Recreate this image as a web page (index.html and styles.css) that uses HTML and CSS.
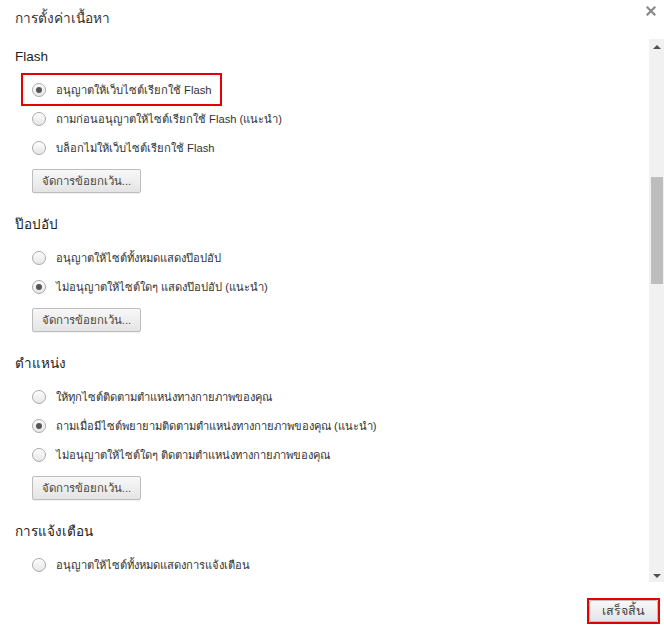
FILE: index.html
```html
<!DOCTYPE html>
<html lang="th">
<head>
<meta charset="utf-8">
<title>การตั้งค่าเนื้อหา</title>
<link rel="stylesheet" href="styles.css">
</head>
<body>
<div class="dialog">
  <div class="dialog-header">
    <h1 class="dialog-title">การตั้งค่าเนื้อหา</h1>
    <button class="close-btn" aria-label="ปิด">
      <svg width="10" height="10" viewBox="0 0 10 10"><path d="M1.5 1.5 L8.5 8.5 M8.5 1.5 L1.5 8.5" stroke="#8a8a8a" stroke-width="2.2" stroke-linecap="square"/></svg>
    </button>
  </div>

  <div class="dialog-body">
    <div class="scroll-content">
      <section class="group">
        <h2 class="group-title">Flash</h2>
        <label class="option highlight"><span class="radio checked"></span><span class="option-text">อนุญาตให้เว็บไซต์เรียกใช้ Flash</span></label>
        <label class="option"><span class="radio"></span><span class="option-text">ถามก่อนอนุญาตให้ไซต์เรียกใช้ Flash (แนะนำ)</span></label>
        <label class="option"><span class="radio"></span><span class="option-text">บล็อกไม่ให้เว็บไซต์เรียกใช้ Flash</span></label>
        <button class="btn btn-exceptions">จัดการข้อยกเว้น...</button>
      </section>

      <section class="group">
        <h2 class="group-title">ป๊อปอัป</h2>
        <label class="option"><span class="radio"></span><span class="option-text">อนุญาตให้ไซต์ทั้งหมดแสดงป๊อปอัป</span></label>
        <label class="option"><span class="radio checked"></span><span class="option-text">ไม่อนุญาตให้ไซต์ใดๆ แสดงป๊อปอัป (แนะนำ)</span></label>
        <button class="btn btn-exceptions">จัดการข้อยกเว้น...</button>
      </section>

      <section class="group">
        <h2 class="group-title">ตำแหน่ง</h2>
        <label class="option"><span class="radio"></span><span class="option-text">ให้ทุกไซต์ติดตามตำแหน่งทางกายภาพของคุณ</span></label>
        <label class="option"><span class="radio checked"></span><span class="option-text">ถามเมื่อมีไซต์พยายามติดตามตำแหน่งทางกายภาพของคุณ (แนะนำ)</span></label>
        <label class="option"><span class="radio"></span><span class="option-text">ไม่อนุญาตให้ไซต์ใดๆ ติดตามตำแหน่งทางกายภาพของคุณ</span></label>
        <button class="btn btn-exceptions">จัดการข้อยกเว้น...</button>
      </section>

      <section class="group">
        <h2 class="group-title">การแจ้งเตือน</h2>
        <label class="option"><span class="radio"></span><span class="option-text">อนุญาตให้ไซต์ทั้งหมดแสดงการแจ้งเตือน</span></label>
      </section>
    </div>

    <div class="scrollbar">
      <span class="arrow arrow-up"></span>
      <div class="track"><div class="thumb"></div></div>
      <span class="arrow arrow-down"></span>
    </div>
  </div>

  <div class="dialog-footer">
    <div class="done-frame"><button class="btn btn-done">เสร็จสิ้น</button></div>
  </div>
</div>
</body>
</html>
```
FILE: styles.css
```css
* { box-sizing: border-box; }

html, body {
  margin: 0;
  padding: 0;
  background: #fff;
}

body {
  font-family: "Liberation Sans", "Noto Sans", sans-serif;
  font-size: 11.2px;
  color: #333;
}

.dialog {
  width: 664px;
  height: 632px;
  display: flex;
  flex-direction: column;
  background: #fff;
}

/* header */
.dialog-header {
  height: 39px;
  display: flex;
  justify-content: space-between;
  align-items: flex-start;
}

.dialog-title {
  margin: 0;
  padding: 9px 0 0 15px;
  font-size: 13.7px;
  font-weight: normal;
  line-height: 20px;
  color: #333;
}

.close-btn {
  border: 0;
  background: none;
  padding: 0;
  margin: 6px 8px 0 0;
  width: 10px;
  height: 10px;
  display: flex;
}

/* scrolling body */
.dialog-body {
  height: 543px;
  display: flex;
  overflow: hidden;
}

.scroll-content {
  flex: 1;
  padding: 7px 0 0 15px;
  overflow: hidden;
}

.group { margin-bottom: 21px; }

.group-title {
  margin: 0 0 9px;
  height: 20px;
  padding-top: 1px;
  line-height: 20px;
  font-size: 13.5px;
  font-weight: normal;
  color: #222;
}

.option {
  height: 29px;
  display: flex;
  align-items: center;
  padding-left: 17px;
  width: max-content;
}

.option.highlight {
  outline: 2px solid #e60000;
  outline-offset: 0;
  margin-left: 8px;
  padding-left: 9px;
  padding-right: 9px;
}

.radio {
  width: 14px;
  height: 14px;
  border-radius: 50%;
  border: 1px solid #a9a9a9;
  background: linear-gradient(#fdfdfd, #e6e6e6);
  box-shadow: inset 0 1px 1px #fff;
  display: flex;
  align-items: center;
  justify-content: center;
  flex: none;
}

.radio.checked::after {
  content: "";
  width: 6px;
  height: 6px;
  border-radius: 50%;
  background: #555;
}

.option-text {
  margin-left: 10px;
  line-height: 18px;
  color: #333;
}

.btn {
  font-family: inherit;
  font-size: 11.4px;
  color: #444;
  border: 1px solid #bdbdbd;
  border-radius: 2px;
  background: linear-gradient(#f8f8f8, #e4e4e4);
  box-shadow: 0 1px 0 rgba(0, 0, 0, 0.06);
  padding: 0;
}

.btn-exceptions {
  display: block;
  margin: 7px 0 0 17px;
  width: 109px;
  height: 24px;
}

/* scrollbar */
.scrollbar {
  width: 15px;
  background: #f1f1f1;
  display: flex;
  flex-direction: column;
  align-items: center;
}

.arrow {
  width: 0;
  height: 0;
  border-left: 4px solid transparent;
  border-right: 4px solid transparent;
  flex: none;
}

.arrow-up {
  margin-top: 6px;
  border-bottom: 4px solid #505050;
}

.arrow-down {
  margin-bottom: 4px;
  border-top: 4px solid #505050;
}

.track {
  flex: 1;
  width: 100%;
  padding-top: 128px;
}

.thumb {
  margin: 0 1px 0 2px;
  height: 107px;
  background: #bdbdbd;
}

/* footer */
.dialog-footer {
  flex: 1;
  display: flex;
  justify-content: flex-end;
  align-items: flex-start;
  padding: 16px 4px 0 0;
}

.done-frame {
  border: 2px solid #e60000;
  display: flex;
}

.btn-done {
  width: 69px;
  height: 22px;
  font-size: 12.5px;
  color: #444;
}
```
